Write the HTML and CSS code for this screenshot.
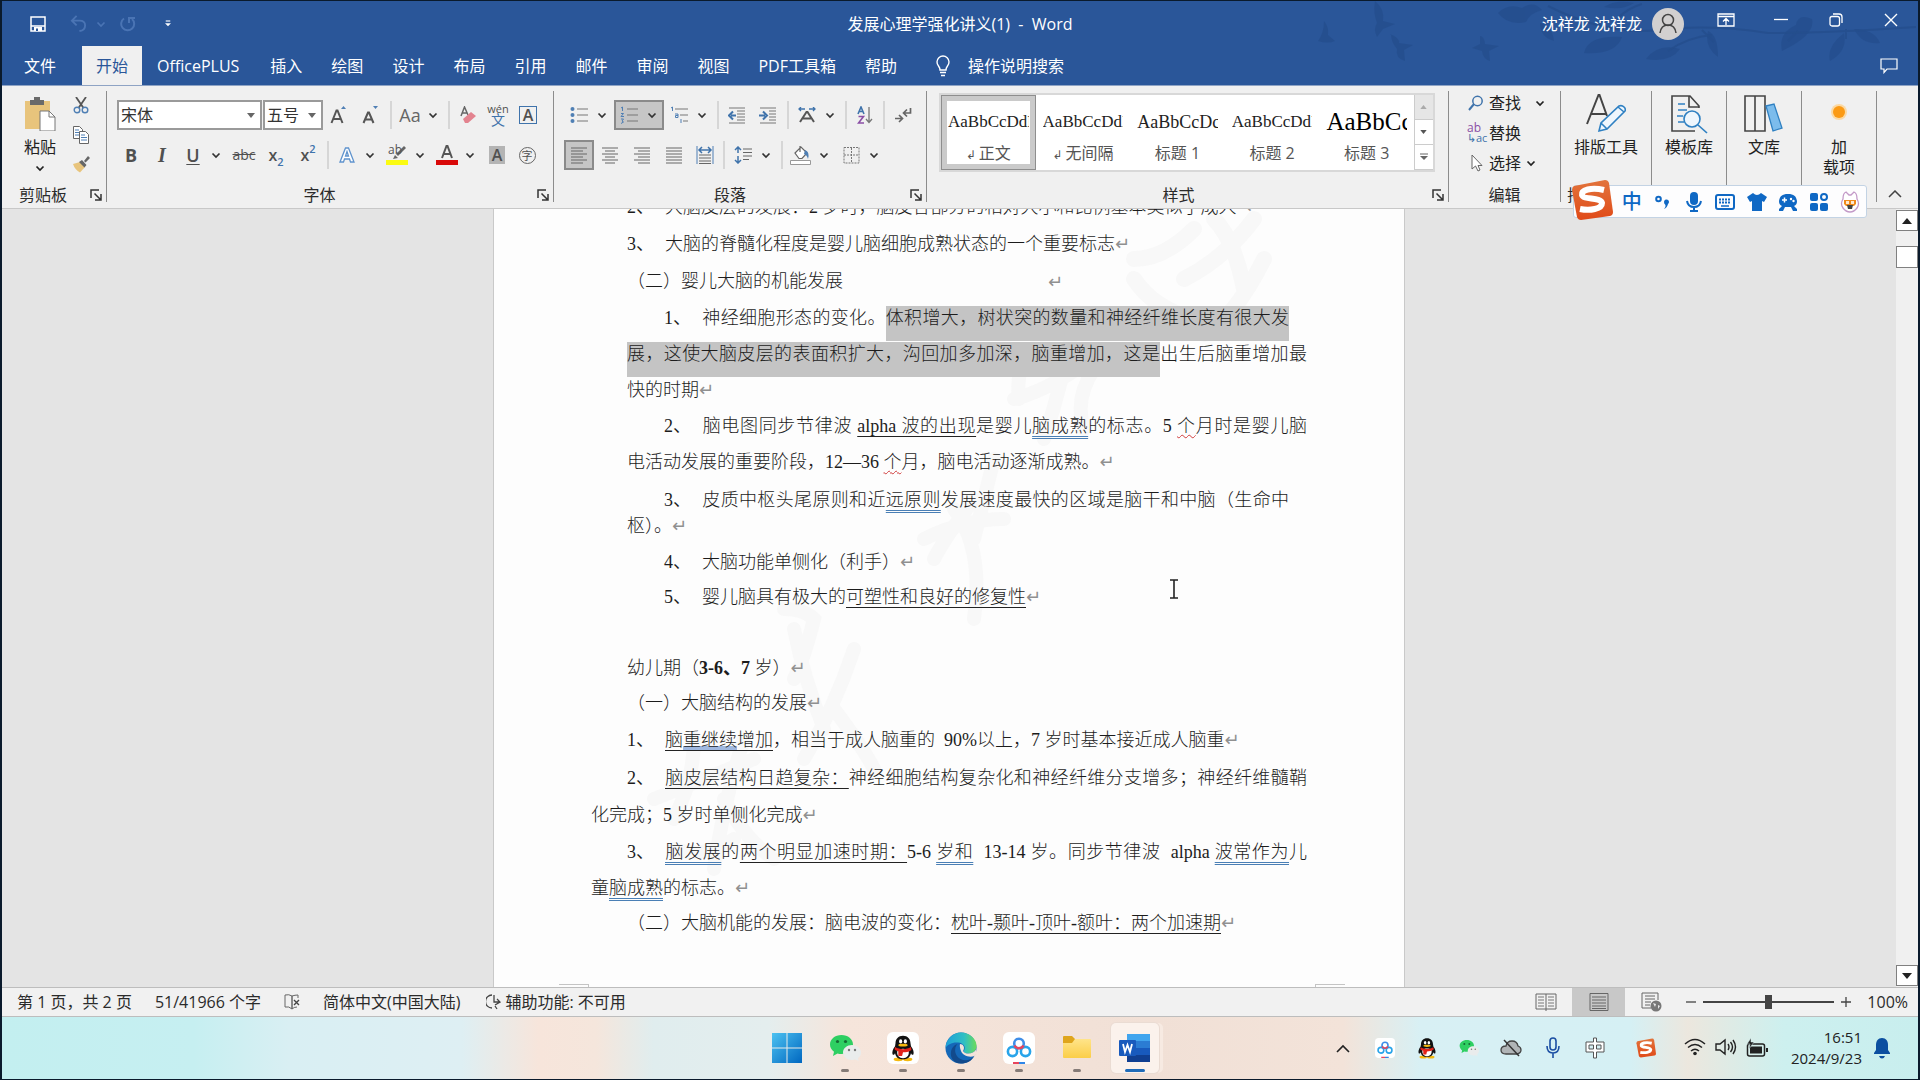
FILE: index.html
```html
<!DOCTYPE html>
<html lang="zh-CN">
<head>
<meta charset="utf-8">
<title>发展心理学强化讲义(1) - Word</title>
<link rel="stylesheet" href="styles.css">
</head>
<body>
<svg class="defs" aria-hidden="true">
  <defs>
    <linearGradient id="gWin" x1="0" y1="0" x2="1" y2="1"><stop offset="0" stop-color="#4cc2f1"/><stop offset="1" stop-color="#0067c0"/></linearGradient>
    <linearGradient id="gEdge" x1="0" y1="0" x2="1" y2="0"><stop offset="0" stop-color="#1f9fd8"/><stop offset=".6" stop-color="#2fbfc4"/><stop offset="1" stop-color="#6bdb5a"/></linearGradient>
    <linearGradient id="gFold" x1="0" y1="0" x2="0" y2="1"><stop offset="0" stop-color="#ffe48a"/><stop offset="1" stop-color="#fbce48"/></linearGradient>
    <linearGradient id="gSogou" x1="0" y1="0" x2="0" y2="1"><stop offset="0" stop-color="#e2743c"/><stop offset="1" stop-color="#e04a18"/></linearGradient>
    <symbol id="chev" viewBox="0 0 10 10"><path d="M1.5 3.5 5 7l3.5-3.500" fill="none" stroke="currentColor" stroke-width="1.700"/></symbol>
    <symbol id="launch" viewBox="0 0 12 12"><path d="M1 9V1h8M4.500 4.500l6 6M11 5v6H5" fill="none" stroke="#333" stroke-width="1.500"/></symbol>
    <symbol id="qq" viewBox="0 0 32 32">
      <ellipse cx="11" cy="28" rx="5" ry="2" fill="#f5b90f"/><ellipse cx="21" cy="28" rx="5" ry="2" fill="#f5b90f"/>
      <path d="M16 3c-5 0-8 3.500-8 8l-.500 3C5 17 4 21 5 23c1 1 2-.500 2.500-1.500C8.500 26 11.500 28 16 28s7.500-2 8.500-6.500c.500 1 1.500 2.500 2.500 1.500 1-2 0-6-2.500-9l-.500-3c0-4.500-3-8-8-8z" fill="#111"/>
      <path d="M10 19c1-3 11-3 12 0 1 5-2 8-6 8s-7-3-6-8z" fill="#fff"/>
      <path d="M7.500 15c5 3 12 3 17 0l.500 3c-3 2-6 2.500-9 2.500l-1 4h-4v-5c-1.500-.500-3-1-4-2z" fill="#e2231a"/>
      <ellipse cx="13.500" cy="9" rx="1.700" ry="2.300" fill="#fff"/><ellipse cx="18.500" cy="9" rx="1.700" ry="2.300" fill="#fff"/>
      <ellipse cx="16" cy="13" rx="5" ry="1.500" fill="#f5b90f"/>
    </symbol>
    <symbol id="wechat" viewBox="0 0 32 32">
      <path d="M12.500 3C6 3 1 7.200 1 12.500c0 3 1.600 5.500 4 7.300L4 24l4.500-2.500c1.200.400 2.600.500 4 .500C19 22 24 17.800 24 12.500S19 3 12.500 3z" fill="#2ecf62"/>
      <circle cx="8.500" cy="9.500" r="1.600" fill="#136b34"/><circle cx="16.500" cy="9.500" r="1.600" fill="#136b34"/>
      <path d="M23 13c5 0 9 3.300 9 7.500 0 2.300-1.200 4.300-3 5.700l.600 2.800-3.100-1.400c-1.100.300-2.200.400-3.500.400-5 0-9-3.300-9-7.500S18 13 23 13z" fill="#e9ecec"/>
      <circle cx="20" cy="18" r="1.200" fill="#777"/><circle cx="26" cy="18" r="1.200" fill="#777"/>
    </symbol>
    <symbol id="baidu" viewBox="0 0 32 32">
      <rect x="0" y="0" width="32" height="32" rx="6" fill="#fff"/>
      <g fill="none" stroke-width="2.600"><circle cx="9.500" cy="19.500" r="4.600" stroke="#28a4ea"/><circle cx="22.500" cy="19.500" r="4.600" stroke="#28a4ea"/><circle cx="16" cy="11.500" r="4.800" stroke="#3f8ee8"/><path d="M11.500 13.500a5 5 0 0 0 9 0" stroke="#e8455c"/></g>
      <path d="M10 31h6" stroke="#e8455c" stroke-width="2"/><path d="M16 31h6" stroke="#2f86e8" stroke-width="2"/>
    </symbol>
    <symbol id="sogou" viewBox="0 0 42 42">
      <path d="M3 7 34 1q3 0 4 3l4 29q0 3-3 4L10 41q-3 0-4-3L1 11q0-3 2-4z" fill="url(#gSogou)"/>
      <path d="M33 11C20 8 10 11 11 16c1 5 19 2 20 8 0 6-12 8-22 6" fill="none" stroke="#fff" stroke-width="6"/>
    </symbol>
  </defs>
</svg>

<div class="word">
  <header class="top">
    <svg class="art" width="600" height="84" viewBox="0 0 600 84" aria-hidden="true">
      <g fill="#244d8c" opacity=".7">
        <path d="M0 40q6-8 6-20 5 6 4 14l7 6q-7 3-17 0z"/>
        <path d="M57 0q10 8 8 20l12 3-12 5-6 8q-4-8 0-14-4-10-2-22zM72 33q10 4 9 9l14 2-9 5 1 11q-10-3-8-12-6-7-6-15zM162 35q4 0 5 8l14 2-10 5 1 10q-7-2-8-10l-10-3 8-4z"/>
        <path d="M180 12q10-10 24-5 12-8 20 2-12 3-16 12-18 4-28-9zM222 22q12 2 14 18-14-4-14-18zM266 52q4-18 38-16-6 18-38 16zM328 58q12-16 34-10-10 14-34 10zM390 30q10 4 10 26-14-10-10-26zM464 50q-4-18 14-26 2-12 16-6 4 16-30 32zM512 60q-4-14 14-28 4 18-14 28zM536 28q20 0 26 14-18 2-26-14zM286 6q12-8 30-4-12 8-30 4z"/>
      </g>
      <path d="M230 5q60 30 110 24t110 3q60 0 148-6M300 17q10-10 24-14M384 29l12 12M350 50q20-14 44-16M480 30l-10 10M528 28v10" fill="none" stroke="#244d8c" stroke-width="2" opacity=".8"/>
    </svg>
    <div class="titlebar">
      <div class="quick">
        <button class="qa" aria-label="保存"><svg width="16" height="16" viewBox="0 0 16 16"><path d="M1 1h14v14H1zM1 10h14" fill="none" stroke="#fff" stroke-width="1.500"/><path d="M4 11h8v4H4z" fill="#fff"/><path d="M6 12.500h2V15H6z" fill="#2a5699"/></svg></button>
        <button class="qa dim undo" aria-label="撤消"><svg width="17" height="17" viewBox="0 0 18 18"><path d="M7 1 2 6l5 5M2 6h8q6 0 6 5t-6 6" fill="none" stroke="currentColor" stroke-width="2"/></svg></button>
        <button class="qa slim dim" aria-label="撤消列表"><svg width="10" height="10"><use href="#chev"/></svg></button>
        <button class="qa dim redo" aria-label="重复"><svg width="16" height="16" viewBox="0 0 16 16"><path d="M4 2.500a6.500 6.500 0 1 0 8 .500M9 1v6M8 2h7" fill="none" stroke="currentColor" stroke-width="2"/></svg></button>
        <button class="qa undo" aria-label="自定义"><svg width="6" height="8" viewBox="0 0 8 10"><path d="M1 1h6" stroke="#fff" stroke-width="1.500"/><path d="M0 4h8L4 8z" fill="#fff"/></svg></button>
      </div>
      <h1 class="title">发展心理学强化讲义(1)&nbsp; -&nbsp; Word</h1>
      <div class="account">
        <span>沈祥龙 沈祥龙</span>
        <svg class="avatar" width="32" height="32" viewBox="0 0 32 32"><circle cx="16" cy="16" r="16" fill="#d2d0d0"/><circle cx="16" cy="12" r="5.500" fill="none" stroke="#444" stroke-width="1.500"/><path d="M8 25q1-8 8-8t8 8" fill="none" stroke="#444" stroke-width="1.500"/></svg>
        <button class="wb" aria-label="功能区显示选项"><svg width="18" height="14" viewBox="0 0 18 14"><path d="M1 1h16v12H1zM1 3.500h16M9 12V6M6 8.500 9 5.500l3 3" fill="none" stroke="#fff" stroke-width="1.300"/></svg></button>
        <button class="wb" aria-label="最小化"><svg width="14" height="14" viewBox="0 0 14 14"><path d="M0 6.500h14" stroke="#fff" stroke-width="1.300"/></svg></button>
        <button class="wb" aria-label="还原"><svg width="14" height="14" viewBox="0 0 14 14"><rect x="1" y="3.500" width="9.500" height="9.500" rx="2" fill="none" stroke="#fff" stroke-width="1.300"/><path d="M4 1h6q3 0 3 3v6" fill="none" stroke="#fff" stroke-width="1.300"/></svg></button>
        <button class="wb" aria-label="关闭"><svg width="14" height="14" viewBox="0 0 14 14"><path d="m1 1 12 12M13 1 1 13" stroke="#fff" stroke-width="1.400"/></svg></button>
      </div>
    </div>
    <nav class="tabs">
      <a href="#" class="file">文件</a><a href="#" class="on">开始</a><a href="#" class="plus">OfficePLUS</a><a href="#">插入</a><a href="#">绘图</a><a href="#">设计</a><a href="#">布局</a><a href="#">引用</a><a href="#">邮件</a><a href="#">审阅</a><a href="#">视图</a><a href="#">PDF工具箱</a><a href="#">帮助</a>
      <button class="tell"><svg width="14" height="22" viewBox="0 0 14 22"><path d="M4 15q0-2-1.500-4A6 6 0 1 1 11.500 11Q10 13 10 15zM4 17.500h6M5 20.500h4" fill="none" stroke="#fff" stroke-width="1.400"/></svg>操作说明搜索</button>
      <button class="comment" aria-label="批注"><svg width="18" height="16" viewBox="0 0 18 16"><path d="M1 1h16v10H7l-3 3.500V11H1z" fill="none" stroke="#fff" stroke-width="1.200"/></svg></button>
    </nav>
  </header>

  <section class="ribbon">
    <div class="group clip">
      <div class="body clipbody">
        <button class="paste"><svg width="32" height="34" viewBox="0 0 32 34"><path d="M1 4h25v28H1z" fill="#e8c47c"/><path d="M6 3h4V0h6v3h4v5H6z" fill="#6a6a6a"/><path d="M16 14h9l6 6v14H16z" fill="#fff" stroke="#777"/><path d="M25 14v6h6" fill="none" stroke="#777"/></svg>粘贴<svg width="10" height="10"><use href="#chev"/></svg></button>
        <div class="stack">
          <button aria-label="剪切"><svg width="16" height="17" viewBox="0 0 16 17"><path d="M3 0l7.500 11M13 0 5.500 11" stroke="#555" stroke-width="1.800"/><circle cx="4" cy="13" r="2.800" fill="none" stroke="#4f7fb4" stroke-width="1.400"/><circle cx="12" cy="13" r="2.800" fill="none" stroke="#4f7fb4" stroke-width="1.400"/></svg></button>
          <button aria-label="复制"><svg width="16" height="18" viewBox="0 0 16 18"><path d="M.5.500h6l3 3v9h-9z" fill="#fff" stroke="#666"/><path d="M2 4h4M2 6.500h6M2 9h6" stroke="#4f7fb4"/><path d="M6.500 5.500h6l3 3v9h-9z" fill="#fff" stroke="#666"/><path d="M8 9h4M8 11.500h6M8 14h6" stroke="#4f7fb4"/></svg></button>
          <button aria-label="格式刷"><svg width="18" height="17" viewBox="0 0 18 17"><path d="M1 8 8 6l5 5-5 5.500Q3 14 1 8z" fill="#e8c47c"/><path d="m7 6 3-2 4.500 5-2 2.500zM12 5l4-5 2 2-4.500 4.500z" fill="#666"/></svg></button>
        </div>
      </div>
      <div class="foot"><span>剪贴板</span><button class="ln" aria-label="剪贴板选项"><svg width="12" height="12"><use href="#launch"/></svg></button></div>
    </div>

    <div class="group font">
      <div class="body rows">
        <div class="row r1">
          <label class="combo fam"><select aria-label="字体"><option>宋体</option></select><svg width="8" height="5" viewBox="0 0 8 5"><path d="M0 0h8L4 5z" fill="#666"/></svg></label>
          <label class="combo size"><select aria-label="字号"><option>五号</option></select><svg width="8" height="5" viewBox="0 0 8 5"><path d="M0 0h8L4 5z" fill="#666"/></svg></label>
          <button class="b32" aria-label="增大字号"><svg width="18" height="20" viewBox="0 0 18 20"><path d="M1.500 18 6.500 5.500h1L12.500 18M3 14h8" fill="none" stroke="#555" stroke-width="2"/><path d="m11 4 2.500-3L16 4z" fill="#4f7fb4"/></svg></button>
          <button class="b32" aria-label="减小字号"><svg width="18" height="20" viewBox="0 0 18 20"><path d="M1.500 18 6 7.500h1L11.500 18M3 14.500h7" fill="none" stroke="#555" stroke-width="2"/><path d="m11 1 2.500 3L16 1z" fill="#4f7fb4"/></svg></button>
          <i class="sep"></i>
          <button class="dd"><span class="aa">Aa</span><svg width="10" height="10"><use href="#chev"/></svg></button>
          <i class="sep"></i>
          <button class="b30" aria-label="清除格式"><svg width="16" height="18" viewBox="0 0 16 18"><path d="M1 10 4.500 1 8 9M2.500 7H7" fill="none" stroke="#666" stroke-width="1.500"/><path d="m3 13 8-7 5 4-8 7H5z" fill="#e3838f"/></svg></button>
          <button class="b30 pinyin" aria-label="拼音指南"><span>wén</span><b>文</b></button>
          <button class="b30"><span class="boxed">A</span></button>
        </div>
        <div class="row">
          <button class="b30 bold">B</button>
          <button class="b32 ital">I</button>
          <button class="dd"><span class="und">U</span><svg width="10" height="10"><use href="#chev"/></svg></button>
          <button class="b32 strike">abc</button>
          <button class="b32 x">x<sub>2</sub></button>
          <button class="b32 x">x<sup>2</sup></button>
          <i class="sep"></i>
          <button class="dd" aria-label="文本效果"><span><svg width="16" height="16" viewBox="0 0 16 16"><path d="M1 15 6.500 1h3L15 15h-3.500l-1-3h-5l-1 3zM6.500 9h3L8 4.500z" fill="#fff" stroke="#5f93cd" stroke-width="1.300"/></svg></span><svg width="10" height="10"><use href="#chev"/></svg></button>
          <button class="dd" aria-label="突出显示"><span class="mark"><span class="hl">ab</span><svg width="22" height="20" viewBox="0 0 22 20"><path d="m10 9 8-8 2 2-8 8zM9 10l3 3-5 1z" fill="#666"/><path d="M0 15h22v5H0z" fill="#fbfb12"/></svg></span><svg width="10" height="10"><use href="#chev"/></svg></button>
          <button class="dd" aria-label="字体颜色"><span><svg width="22" height="20" viewBox="0 0 22 20"><path d="m6 13 4.500-12h1L16 13M7.500 9h7" fill="none" stroke="#555" stroke-width="2"/><path d="M0 15h22v5H0z" fill="#d90909"/></svg></span><svg width="10" height="10"><use href="#chev"/></svg></button>
          <button class="b30"><span class="shade">A</span></button>
          <button class="b30"><span class="circ">字</span></button>
        </div>
      </div>
      <div class="foot"><span>字体</span><button class="ln" aria-label="字体选项"><svg width="12" height="12"><use href="#launch"/></svg></button></div>
    </div>

    <div class="group para">
      <div class="body rows">
        <div class="row r1">
          <button class="dd" aria-label="项目符号"><span><svg width="18" height="18" viewBox="0 0 18 18"><path d="M7 3h11M7 9h11M7 15h11" stroke="#777"/><g fill="#4f7fb4"><circle cx="2.500" cy="3" r="2"/><circle cx="2.500" cy="9" r="2"/><circle cx="2.500" cy="15" r="2"/></g></svg></span><svg width="10" height="10"><use href="#chev"/></svg></button>
          <button class="dd sel" aria-label="编号"><span><svg width="18" height="18" viewBox="0 0 18 18"><path d="M7 3h11M7 9h11M7 15h11" stroke="#777"/><path d="M1 2l1.500-1v4M1 7.500h2.500L1 10.500h3M1 13h2.500L2 15l1.500 1L1 17.500" fill="none" stroke="#4f7fb4"/></svg></span><svg width="10" height="10"><use href="#chev"/></svg></button>
          <button class="dd" aria-label="多级列表"><span><svg width="18" height="18" viewBox="0 0 18 18"><path d="M5 3h13M10 9h8M13 15h5" stroke="#777"/><path d="M1 2l1.500-1v4M5 8h3v3.500H5.500v-2H8M11 13v4" fill="none" stroke="#4f7fb4"/></svg></span><svg width="10" height="10"><use href="#chev"/></svg></button>
          <i class="sep"></i>
          <button class="b30" aria-label="减少缩进"><svg width="18" height="17" viewBox="0 0 18 17"><path d="M1 1h16M9 4h8M9 7h8M9 10h8M9 13h8M1 16h16" stroke="#777"/><path d="M8 8.500H3M5 4.500l-4 4 4 4" fill="none" stroke="#3f73ab" stroke-width="2"/></svg></button>
          <button class="b32" aria-label="增加缩进"><svg width="18" height="17" viewBox="0 0 18 17"><path d="M1 1h16M10 4h7M10 7h7M10 10h7M10 13h7M1 16h16" stroke="#777"/><path d="M0 8.500h6M4 4.500l4 4-4 4" fill="none" stroke="#3f73ab" stroke-width="2"/></svg></button>
          <i class="sep"></i>
          <button class="dd" aria-label="中文版式"><span><svg width="18" height="16" viewBox="0 0 18 16"><path d="M2 15 8.500 5h1L16 15M5 11.500h8" fill="none" stroke="#555" stroke-width="2"/><path d="M7 2H1m2-2L1 2l2 2M11 2h6m-2-2 2 2-2 2" fill="none" stroke="#3f73ab" stroke-width="1.300"/></svg></span><svg width="10" height="10"><use href="#chev"/></svg></button>
          <i class="sep"></i>
          <button class="b30" aria-label="排序"><svg width="16" height="18" viewBox="0 0 16 18"><path d="m1 8 3-7 3 7M2 5.500h4" fill="none" stroke="#3f73ab" stroke-width="1.600"/><path d="M1.500 10.500h5L1.500 17h5.500" fill="none" stroke="#8a4fa5" stroke-width="1.600"/><path d="M12 1v15M9 13l3 3.500 3-3.500" fill="none" stroke="#777" stroke-width="1.300"/></svg></button>
          <i class="sep"></i>
          <button class="b30" aria-label="显示编辑标记"><svg width="17" height="15" viewBox="0 0 17 15"><path d="M15.500 0v5H9m3-3.500L8.500 5 12 8.500M0 10.500h7M4 7l3.500 3.500L4 14" fill="none" stroke="#666" stroke-width="1.700"/></svg></button>
        </div>
        <div class="row">
          <button class="b30 sel" aria-label="左对齐"><svg width="16" height="17" viewBox="0 0 16 17"><path d="M0 1h16M0 4h12M0 7h16M0 10h12M0 13h16M0 16h12" stroke="#666"/></svg></button>
          <button class="b32" aria-label="居中"><svg width="16" height="17" viewBox="0 0 16 17"><path d="M0 1h16M3 4h10M0 7h16M3 10h10M0 13h16M3 16h10" stroke="#666"/></svg></button>
          <button class="b32" aria-label="右对齐"><svg width="16" height="17" viewBox="0 0 16 17"><path d="M0 1h16M4 4h12M0 7h16M4 10h12M0 13h16M4 16h12" stroke="#666"/></svg></button>
          <button class="b32" aria-label="两端对齐"><svg width="16" height="17" viewBox="0 0 16 17"><path d="M0 1h16M0 4h16M0 7h16M0 10h16M0 13h16M0 16h16" stroke="#666"/></svg></button>
          <button class="b30" aria-label="分散对齐"><svg width="18" height="18" viewBox="0 0 18 18"><path d="M1 0v18M17 0v18" stroke="#4f7fb4"/><path d="M3 9h12M3 12h12M3 15h12M3 17.500h12" stroke="#666"/><path d="M3 4h12M6 1 3 4l3 3M12 1l3 3-3 3" fill="none" stroke="#3f73ab" stroke-width="1.500"/></svg></button>
          <i class="sep"></i>
          <button class="dd" aria-label="行距"><span><svg width="18" height="18" viewBox="0 0 18 18"><path d="M9 3h9M9 6.500h9M9 10h9M9 13.500h6" stroke="#666"/><path d="M4 1v6M1 4l3-3 3 3M4 10v7M1 14l3 3 3-3" fill="none" stroke="#3f73ab" stroke-width="1.500"/></svg></span><svg width="10" height="10"><use href="#chev"/></svg></button>
          <i class="sep"></i>
          <button class="dd" aria-label="底纹"><span><svg width="22" height="20" viewBox="0 0 22 20"><path d="m5 8 6-6 6 6-5 5.500H9zM10 7V1" fill="#fff" stroke="#666" stroke-width="1.200"/><path d="M15 5q5 2 3 9-1-4-4-5z" fill="#4f7fb4"/><path d="M.5 15.500h20v4H.5z" fill="#fff" stroke="#999"/></svg></span><svg width="10" height="10"><use href="#chev"/></svg></button>
          <button class="dd" aria-label="边框"><span><svg width="17" height="17" viewBox="0 0 17 17"><path d="M1 .500h15v15.500H1zM8.500 1v15M1 8h15" fill="none" stroke="#777" stroke-dasharray="2 1"/></svg></span><svg width="10" height="10"><use href="#chev"/></svg></button>
        </div>
      </div>
      <div class="foot"><span>段落</span><button class="ln" aria-label="段落选项"><svg width="12" height="12"><use href="#launch"/></svg></button></div>
    </div>

    <div class="group styles">
      <div class="body">
        <div class="gallery">
          <button class="st cur"><span class="pv">AaBbCcDdI</span><span class="nm"><small>↲</small>正文</span></button>
          <button class="st"><span class="pv">AaBbCcDdI</span><span class="nm"><small>↲</small>无间隔</span></button>
          <button class="st"><span class="pv p2">AaBbCcDc</span><span class="nm">标题 1</span></button>
          <button class="st"><span class="pv">AaBbCcDdI</span><span class="nm">标题 2</span></button>
          <button class="st"><span class="pv p3">AaBbCc</span><span class="nm">标题 3</span></button>
          <div class="gs">
            <button class="off" aria-label="上一行"><svg width="7" height="4" viewBox="0 0 8 5"><path d="M0 5h8L4 0z" fill="#aaa"/></svg></button>
            <button aria-label="下一行"><svg width="7" height="4" viewBox="0 0 8 5"><path d="M0 0h8L4 5z" fill="#555"/></svg></button>
            <button aria-label="其他"><svg width="8" height="8" viewBox="0 0 8 8"><path d="M0 1h8" stroke="#666"/><path d="M0 3h8L4 7z" fill="#666"/></svg></button>
          </div>
        </div>
      </div>
      <div class="foot"><span>样式</span><button class="ln" aria-label="样式选项"><svg width="12" height="12"><use href="#launch"/></svg></button></div>
    </div>

    <div class="group edit">
      <div class="body cmds">
        <button class="cmd wide"><svg width="16" height="16" viewBox="0 0 16 16"><circle cx="9.500" cy="6" r="4.700" fill="none" stroke="#3f73ab" stroke-width="1.500"/><path d="m6 9-5 6" stroke="#3f73ab" stroke-width="2"/></svg><span>查找</span><svg width="10" height="10"><use href="#chev"/></svg></button>
        <button class="cmd"><span class="rep"><b>ab</b><i>↳ac</i></span><span>替换</span></button>
        <button class="cmd"><svg width="16" height="18" viewBox="0 0 16 18"><path d="M4 1v14l3.500-3 2.500 5 2-1-2-4.500h4z" fill="#fff" stroke="#666"/></svg><span>选择</span><svg width="10" height="10"><use href="#chev"/></svg></button>
      </div>
      <div class="foot"><span>编辑</span></div>
    </div>

    <div class="group big wider">
      <div class="body"><button class="bb"><svg width="40" height="40" viewBox="0 0 40 40"><path d="M1 30 12.500 1h1L21 22M5 20h15" fill="none" stroke="#444" stroke-width="2"/><path d="m13 37 2-8 18-17q3-1 5 1t1 4L21 35zM15 29l6 6M32 13l6 5" fill="#eef6fd" stroke="#2f80c2" stroke-width="1.600"/></svg>排版工具</button></div>
      <div class="foot start"><span>排版工具</span></div>
    </div>
    <div class="group big"><div class="body"><button class="bb"><svg width="38" height="40" viewBox="0 0 38 40"><path d="M29 14v-2L20 2H2v35h23M19 2v11h10" fill="none" stroke="#444" stroke-width="1.600"/><path d="M8 10h7M8 16h9M7 22h6M8 28h6" stroke="#2f80c2" stroke-width="1.500"/><circle cx="22" cy="25" r="8" fill="#eef6fd" stroke="#2f80c2" stroke-width="1.600"/><path d="m28 31 9 8" stroke="#2f80c2" stroke-width="1.600"/></svg>模板库</button></div></div>
    <div class="group big"><div class="body"><button class="bb"><svg width="40" height="40" viewBox="0 0 40 40"><path d="M1 2h20v35H1zM11 2v35" fill="none" stroke="#444" stroke-width="1.600"/><path d="m22 12 8-2 8 24-9 3z" fill="#7cbcec" stroke="#2f80c2" stroke-width="1.300"/></svg>文库</button></div></div>
    <div class="group big"><div class="body"><button class="bb"><svg width="40" height="40" viewBox="0 0 40 40"><circle cx="20" cy="18" r="8" fill="#fbd9a4"/><circle cx="20" cy="18" r="6" fill="#fb9a14"/></svg>加<br>载项</button></div></div>
    <button class="fold" aria-label="折叠功能区"><svg width="14" height="8" viewBox="0 0 14 8"><path d="m1 7 6-6 6 6" fill="none" stroke="#444" stroke-width="1.500"/></svg></button>

    <div class="ime">
      <svg class="imelogo" width="42" height="42"><use href="#sogou"/></svg>
      <button class="zh">中</button>
      <button aria-label="标点"><svg width="18" height="18" viewBox="0 0 18 18"><circle cx="4.500" cy="6" r="2.300" fill="none" stroke="#0f68c4" stroke-width="2"/><path d="M10 9a2.500 2.500 0 1 1 4 2q-1 4-4 5 2-2 1.500-4Q10 11 10 9z" fill="#0f68c4"/></svg></button>
      <button aria-label="语音"><svg width="18" height="20" viewBox="0 0 18 20"><rect x="5" y="0" width="8" height="13" rx="4" fill="#0f68c4"/><path d="M2 9q1 6 7 6t7-6M9 15v3M5 19h8" fill="none" stroke="#0f68c4" stroke-width="2"/></svg></button>
      <button aria-label="软键盘"><svg width="20" height="16" viewBox="0 0 20 16"><rect x="1" y="1" width="18" height="14" rx="2" fill="none" stroke="#0f68c4" stroke-width="2"/><path d="M4 5.500h12M4 8.500h12" stroke="#0f68c4" stroke-width="2" stroke-dasharray="2 1"/><path d="M6 12h8" stroke="#0f68c4" stroke-width="1.500"/></svg></button>
      <button aria-label="皮肤"><svg width="20" height="18" viewBox="0 0 20 18"><path d="M6 0q4 4 8 0l6 4-3 5-2-1v10H5V8L3 9 0 4z" fill="#0f68c4"/></svg></button>
      <button aria-label="游戏"><svg width="20" height="18" viewBox="0 0 20 18"><path d="M10 1c6 0 8 2 9 7 0 3-1 4-3 5l3 3v2h-4l-2-4H7l-2 4H1v-2l3-3c-2-1-3-2-3-5 1-5 3-7 9-7z" fill="#0f68c4"/><path d="M4 7h5M6.500 4.500v5" stroke="#fff" stroke-width="1.500"/><circle cx="13" cy="6" r="1.200" fill="#fff"/><circle cx="15.500" cy="8" r="1.200" fill="#fff"/></svg></button>
      <button aria-label="工具箱"><svg width="18" height="18" viewBox="0 0 18 18"><g fill="#0f68c4"><rect width="8" height="8" rx="2"/><rect y="10" width="8" height="8" rx="2"/><rect x="10" y="10" width="8" height="8" rx="2"/></g><circle cx="14" cy="4" r="3" fill="none" stroke="#0f68c4" stroke-width="2"/></svg></button>
      <button aria-label="助手"><svg width="20" height="22" viewBox="0 0 20 22"><path d="M3 8Q3 2 6 1l3 3h2l3-3q3 1 3 7 3 5 0 9-3 4-7 4t-7-4q-3-4 0-9z" fill="#fff" stroke="#c39ac8" stroke-width="1.300"/><path d="M4 9h12v4l-2 2H6l-2-2z" fill="#f08a1c"/><path d="M7 14h6l-1 4H8z" fill="#444"/><path d="M6 10h3v3H6zM11 10h3v3h-3z" fill="#fde9cf"/></svg></button>
    </div>
  </section>

  <main class="work">
    <article class="page">
      <svg class="wm" width="910" height="780" viewBox="0 0 910 780" aria-hidden="true">
        <g fill="none" stroke="#f8f8f8" stroke-linecap="round">
          <path d="M700 20q-30 30-60 30M720 10q20 20 30 70M690 70q40-20 70-60M770 50q-30 60-60 75M640 70q20 30 60 40" stroke-width="16"/>
          <path d="M550 130q-30 20-25 60M580 110q-10 60-30 120M520 190q40-10 90-50M600 160q-20 30-10 60" stroke-width="14"/>
          <path d="M480 290q-30 40-40 60M460 300q30 40 20 110M430 330q40-20 80-20M500 250l-20 80" stroke-width="14"/>
          <path d="M290 400q20 0 30 10-10 40-20 60M300 420q10 50 30 100M360 440q-20 60-50 110M340 500q30 40 40 60" stroke-width="14"/>
          <path d="M200 530q0 40-20 80M160 590q50-20 100-40M250 530q-20 60-30 130M180 640q30 10 60-10M230 590q20 40 50 60" stroke-width="14"/>
        </g>
      </svg>
      <div class="text">
        <p class="ln37"><span class="no">2、</span>大脑皮层的发展：2 岁时，脑皮各部分的相对大小和比例基本类似于成人&nbsp; <i class="cr">↵</i></p>
        <p class="ln37"><span class="no">3、</span>大脑的脊髓化程度是婴儿脑细胞成熟状态的一个重要标志<i class="cr">↵</i></p>
        <p class="ln37 tabbed"><span>（二）婴儿大脑的机能发展</span><i class="cr">↵</i></p>
        <p class="in just early"><span class="no">1、</span>神经细胞形态的变化。<mark>体积增大，树状突的数量和神经纤维长度有很大发</mark></p>
        <p class="just"><mark>展，这使大脑皮层的表面积扩大，沟回加多加深，脑重增加，这是</mark>出生后脑重增加最</p>
        <p>快的时期<i class="cr">↵</i></p>
        <p class="in just"><span class="no">2、</span>脑电图同步节律波 <u>alpha 波的出现</u>是婴儿<u class="dbl">脑成熟</u>的标志。5 <u class="red">个</u>月时是婴儿脑</p>
        <p class="ln37">电活动发展的重要阶段，12—36 <u class="red">个</u>月，脑电活动逐渐成熟。<i class="cr">↵</i></p>
        <div class="tight">
          <p class="in just early"><span class="no">3、</span>皮质中枢头尾原则和近<u class="dbl">远原则</u>发展速度最快的区域是脑干和中脑（生命中</p>
          <p>枢）。<i class="cr">↵</i></p>
        </div>
        <p class="in"><span class="no">4、</span>大脑功能单侧化（利手）<i class="cr">↵</i></p>
        <p class="in ln35"><span class="no">5、</span>婴儿脑具有极大的<u>可塑性和良好的修复性</u><i class="cr">↵</i></p>
        <p class="ln35">&nbsp;</p>
        <p>幼儿期（<b>3-6、7</b> 岁）<i class="cr">↵</i></p>
        <p class="ln35">（一）大脑结构的发展<i class="cr">↵</i></p>
        <p class="ln38"><span class="no">1、</span><u>脑<span class="tint">重继续</span>增加</u>，相当于成人脑重的&nbsp; 90%以上，7 岁时基本接近成人脑重<i class="cr">↵</i></p>
        <p class="ln38 just"><span class="no">2、</span><u>脑皮层结构日趋复杂：</u>神经细胞结构复杂化和神经纤维分支增多；神经纤维髓鞘</p>
        <p class="ln37 out">化完成；5 岁时单侧化完成<i class="cr">↵</i></p>
        <p class="just"><span class="no">3、</span><u class="dbl">脑发展</u>的<u>两个明显加速时期：</u>5-6 <u class="dbl">岁和</u>&nbsp; 13-14 岁。同步节律波&nbsp; alpha <u class="dbl">波常作为</u>儿</p>
        <p class="out">童<u class="dbl">脑成熟</u>的标志。<i class="cr">↵</i></p>
        <p class="ln35">（二）大脑机能的发展：脑电波的变化：<u>枕叶-颞叶-顶叶-额叶：两个加速期</u><i class="cr">↵</i></p>
      </div>
      <div class="corners"><i></i><i class="r"></i></div>
      <svg class="ibeam" width="10" height="20" viewBox="0 0 10 20"><path d="M1 1h8M1 19h8M5 1v18" stroke="#222" stroke-width="1.600"/></svg>
    </article>
    <div class="scroll">
      <button aria-label="向上滚动"><svg width="10" height="6" viewBox="0 0 10 6"><path d="M0 6h10L5 0z" fill="#222"/></svg></button>
      <div class="thumb"></div>
      <button class="down" aria-label="向下滚动"><svg width="10" height="6" viewBox="0 0 10 6"><path d="M0 0h10L5 6z" fill="#222"/></svg></button>
    </div>
  </main>

  <footer class="status">
    <span>第 1 页，共 2 页</span>
    <span>51/41966 个字</span>
    <svg width="16" height="16" viewBox="0 0 16 16"><path d="M8 2Q5 0 1 1v12q4-1 7 2zM8 15V2q3-1 6-1v3M8 15q2-2 5-2" fill="none" stroke="#666"/><path d="m10 6 5 5M15 6l-5 5" stroke="#444" stroke-width="1.400"/></svg>
    <span>简体中文(中国大陆)</span>
    <span class="acc"><svg width="16" height="16" viewBox="0 0 16 16"><path d="M6 1a6.500 6.500 0 0 0 0 13M8 1v7h6M11 5l3 3-5 3M9 12l2 3" fill="none" stroke="#444" stroke-width="1.300"/></svg>辅助功能: 不可用</span>
    <div class="views">
      <button aria-label="阅读视图"><svg width="22" height="18" viewBox="0 0 22 18"><path d="M1 1h20v15H1zM11 1v17" fill="none" stroke="#666"/><path d="M3 4h6M3 7h6M3 10h6M3 13h6M13 4h6M13 7h6M13 10h6M13 13h6" stroke="#777"/></svg></button>
      <button class="on" aria-label="页面视图"><svg width="20" height="18" viewBox="0 0 20 18"><path d="M1 .500h18v17H1zM3 4h14M3 7h14M3 10h14M3 13h14M3 15.500h14" fill="none" stroke="#666"/></svg></button>
      <button aria-label="Web 版式"><svg width="21" height="20" viewBox="0 0 21 20"><path d="M10 16H1V1h16v7M4 4h10M4 7h10M4 10h6M4 13h5" fill="none" stroke="#666"/><circle cx="15" cy="14" r="5.500" fill="#777"/><path d="m12 11 3 1-1 3zM17 13l2 1-2 3z" fill="#e8e8e8"/></svg></button>
    </div>
    <div class="zoom">
      <button aria-label="缩小"><svg width="10" height="12"><path d="M0 6h10" stroke="#444" stroke-width="1.300"/></svg></button>
      <input type="range" min="10" max="190" value="100" aria-label="显示比例">
      <button aria-label="放大"><svg width="10" height="12"><path d="M0 6h10M5 1v10" stroke="#444" stroke-width="1.300"/></svg></button>
      <span>100%</span>
    </div>
  </footer>
</div>

<footer class="taskbar">
  <div class="apps">
    <button aria-label="开始"><svg width="32" height="32" viewBox="0 0 32 32"><path d="M1 1h14.500v14.500H1zM16.500 1H31v14.500H16.500zM1 16.500h14.500V31H1zM16.500 16.500H31V31H16.500z" fill="url(#gWin)"/></svg></button>
    <button class="run" aria-label="微信"><svg width="32" height="32"><use href="#wechat"/></svg></button>
    <button class="run" aria-label="QQ"><svg width="32" height="32" viewBox="0 0 32 32"><rect width="32" height="32" rx="6" fill="#fff"/><use href="#qq" x="1" y="1" width="30" height="30"/></svg></button>
    <button class="run" aria-label="Edge"><svg width="32" height="32" viewBox="0 0 32 32"><circle cx="16" cy="16" r="15.500" fill="#1568b8"/><path d="M.5 16C1 7 8 .500 16 .500c9 0 15.500 6.500 15.500 13.500 0 5-4 7.500-8 7.500-3.500 0-5.500-1.500-4.500-3 2-3 0-7.500-6-8C7 10 2 13 .5 16z" fill="url(#gEdge)"/><path d="M12.500 12c-4 4-3 12 3 15 5 2.500 11 1 14-3.500-3 6-8 8-13.500 8C9 31.500 5 26 6 20c.5-4 3-7 6.500-8z" fill="#124a8c"/><path d="M15 12c3 0 5 3 3.500 6-1 1.500 1 3.500 5 3.500 3 0 6-1.500 7.500-4l.5 4-2 2.500c-6 2-12-1-13.500-5-1-3-1.500-5-1-7z" fill="#f3e3da"/></svg></button>
    <button class="run" aria-label="百度网盘"><svg width="32" height="32"><use href="#baidu"/></svg></button>
    <button class="run" aria-label="文件资源管理器"><svg width="32" height="32" viewBox="0 0 32 32"><path d="M2 5q0-1 1-1h8l3 3v5H2z" fill="#dfa51c"/><path d="M2 11h9l3-4h15q1 0 1 1v17q0 1-1 1H3q-1 0-1-1z" fill="url(#gFold)"/></svg></button>
    <button class="run active" aria-label="Word"><svg width="32" height="32" viewBox="0 0 32 32"><path d="M8 2h23v8H8z" fill="#41a5ee"/><path d="M8 9h23v7H8z" fill="#2b7cd3"/><path d="M8 16h23v7H8z" fill="#185abd"/><path d="M8 23h23v7H8z" fill="#103f91"/><rect x="0" y="8" width="17" height="16" rx="1" fill="#185abd"/><path d="m4 12 2 8 2.500-7L11 20l2-8" fill="none" stroke="#fff" stroke-width="1.800"/></svg></button>
  </div>
  <div class="tray">
    <button aria-label="显示隐藏的图标"><svg width="14" height="9" viewBox="0 0 14 9"><path d="m1 8 6-6 6 6" fill="none" stroke="#222" stroke-width="1.600"/></svg></button>
    <button aria-label="百度网盘"><svg width="20" height="20"><use href="#baidu"/></svg></button>
    <button aria-label="QQ"><svg width="24" height="24"><use href="#qq"/></svg></button>
    <button aria-label="微信"><svg width="20" height="20"><use href="#wechat"/></svg></button>
    <button aria-label="OneDrive"><svg width="22" height="18" viewBox="0 0 22 18"><path d="M6 15q-5 0-5-4t5-4q1-5 6-5t6 5q3 1 3 4t-4 4z" fill="#b0b4b6" stroke="#444" stroke-width="1.300"/><path d="m4 1 15 16" stroke="#333" stroke-width="1.500"/></svg></button>
    <button aria-label="麦克风"><svg width="14" height="22" viewBox="0 0 14 22"><rect x="4" y="1" width="6" height="12" rx="3" fill="none" stroke="#1c4fa3" stroke-width="1.600"/><path d="M1 9q0 7 6 7t6-7M7 16v5" fill="none" stroke="#1c4fa3" stroke-width="1.600"/></svg></button>
    <button aria-label="输入法"><svg width="20" height="22" viewBox="0 0 20 22"><path d="M8.500 1h3v4H19v10h-7.500v6h-3v-6H1V5h7.500zM4 8v4h4.500V8zM11.500 8v4H16V8z" fill="#fff" stroke="#555"/></svg></button>
    <button class="so" aria-label="搜狗输入法"><svg width="20" height="20"><use href="#sogou"/></svg></button>
    <div class="sys">
      <svg width="22" height="18" viewBox="0 0 22 18"><g fill="none" stroke="#222" stroke-width="1.500"><path d="M1 6q10-9 20 0M4 9.500q7-6 14 0M7 13q4-3.500 8 0"/></g><circle cx="11" cy="15.500" r="1.800" fill="#222"/></svg>
      <svg width="22" height="18" viewBox="0 0 22 18"><path d="M1 6h4l5-4v14l-5-4H1zM13 6q2 3 0 6M15.500 4q4 5 0 10M18 2q5 7 0 14" fill="none" stroke="#222" stroke-width="1.400"/></svg>
      <svg width="22" height="20" viewBox="0 0 22 20"><rect x="1.500" y="6" width="17" height="12" rx="2" fill="none" stroke="#222" stroke-width="1.500"/><path d="M4 8.500h12v7H4zM20 10h2v4h-2z" fill="#222"/><path d="M5 0 1 6h3l-1 5 5-7H5z" fill="#222" stroke="#d9f0f0" stroke-width=".5"/></svg>
    </div>
    <div class="clock"><span>16:51</span><span>2024/9/23</span></div>
    <svg width="18" height="22" viewBox="0 0 18 22"><path d="M9 1c-4 0-6 3-6 7v5l-2 3v1h16v-1l-2-3V8c0-4-2-7-6-7zM6 19h6q-1 2.500-3 2.500T6 19z" fill="#0b4fa0"/></svg>
  </div>
</footer>
</body>
</html>
```
FILE: styles.css
```css
* { box-sizing: border-box; }
html, body { height: 100%; }
body {
  margin: 0;
  padding: 1px 2px;
  background: #0a1a2c;
  display: flex;
  flex-direction: column;
  overflow: hidden;
  font: 16px/20px "Open Sans", "Noto Sans CJK SC", sans-serif;
  color: #2b2b2b;
}
button { margin: 0; padding: 0; border: 0; background: none; font: inherit; color: inherit; display: flex; align-items: center; justify-content: center; }
svg { display: block; flex: none; }
a { color: inherit; text-decoration: none; }
p { margin: 0; }
.defs { position: absolute; width: 0; height: 0; }

.word { flex: 1; min-height: 0; display: flex; flex-direction: column; background: #f0f0f0; }

/* title bar and tabs */
.top { position: relative; background: #2a5699; color: #fff; border-bottom: 1px solid #8ea3c4; }
.art { position: absolute; right: 0; top: 0; }
.titlebar { position: relative; height: 45px; display: grid; grid-template-columns: 1fr auto 1fr; align-items: center; }
.quick { display: flex; align-items: center; padding-left: 21px; }
.qa { width: 30px; height: 30px; }
.qa.slim { width: 16px; }
.qa.dim { color: #4a74b4; }
.qa.undo { margin-left: 10px; }
.qa.redo { margin-left: 4px; }
.title { margin: 0; font-size: 16px; font-weight: 400; }
.account { display: flex; justify-content: flex-end; align-items: center; }
.avatar { margin: 0 14px 0 10px; }
.wb { width: 55px; height: 30px; margin-bottom: 8px; }
.tabs { position: relative; display: flex; height: 39px; }
.tabs a { padding: 0 14px; margin-right: 1px; display: flex; align-items: center; }
.tabs .file { padding: 0 26px 0 22px; margin: 0; }
.tabs .on { background: #f0f0f0; color: #2a5699; }
.tabs .plus { margin-right: 3px; }
.tell { gap: 18px; margin-left: 24px; }
.comment { margin-left: auto; width: 58px; }

/* ribbon */
.ribbon { position: relative; display: flex; height: 123px; padding: 5px 0 6px; border-bottom: 1px solid #c8c8c8; background: #f0f0f0; }
.group { flex: none; display: flex; flex-direction: column; border-right: 1px solid #8c8c8c; }
.body { flex: 1; min-height: 0; }
.foot { position: relative; height: 20px; line-height: 20px; display: flex; justify-content: center; margin-bottom: -3px; }
.foot.start { justify-content: flex-start; padding-left: 6px; }
.ln { position: absolute; right: 3px; bottom: 3px; width: 14px; height: 14px; }
.clip { width: 105px; }
.clip .foot { padding-right: 22px; }
.font { width: 447px; padding-left: 9px; }
.para { width: 373px; padding-left: 10px; }
.styles { flex: 1; padding-left: 12px; min-width: 0; }
.font .foot, .para .foot, .styles .foot { padding-right: 30px; }
.edit { width: 112px; }
.big { width: 75px; }
.big.wider { width: 91px; }
.clipbody { display: flex; padding: 6px 0 0 20px; }
.paste { flex-direction: column; justify-content: flex-start; width: 36px; gap: 5px; line-height: 22px; white-space: nowrap; color: #222; }
.stack { display: flex; flex-direction: column; justify-content: space-between; margin-left: 14px; height: 76px; }
.rows { display: flex; flex-direction: column; gap: 10px; padding-top: 9px; }
.row { display: flex; height: 30px; align-items: stretch; color: #505050; }
.b30, .b32, .dd { flex: none; height: 30px; }
.b30 { width: 30px; }
.b32 { width: 32px; }
.dd { width: 50px; color: #333; }
.dd > :first-child { width: 30px; display: flex; justify-content: center; }
.dd > svg { width: 10px; margin: 0 7px 0 3px; }
.sel { background: #c6c6c6; outline: 2px solid #8a8a8a; outline-offset: -2px; }
.sep { width: 2px; margin: 1px 3px; background: #d6d6d6; }
.combo { position: relative; display: flex; height: 30px; border: 2px solid #9a9a9a; background: #fff; }
.combo select { appearance: none; width: 100%; border: 0; padding: 0 2px; background: transparent; font: inherit; color: #333; }
.combo svg { position: absolute; right: 5px; top: 11px; }
.fam { width: 145px; margin: 0 1px; }
.size { width: 60px; }
.aa { font-size: 18px; color: #666; }
.pinyin { flex-direction: column; font-size: 11px; line-height: 9px; }
.pinyin b { font-size: 14px; line-height: 14px; font-weight: 400; color: #3f73ab; }
.boxed { border: 1px solid #3f73ab; width: 18px; height: 18px; line-height: 16px; font-weight: 600; }
.bold { font-size: 18px; font-weight: 700; }
.ital { font: italic 700 20px "Liberation Serif", serif; }
.und { font-size: 18px; font-weight: 600; color: #505050; text-decoration: underline; text-underline-offset: 2px; }
.strike { font-size: 14px; text-decoration: line-through; }
.x { font-size: 16px; font-weight: 600; }
.x sub, .x sup { font-size: 11px; line-height: 10px; color: #3f73ab; }
.x sub { align-self: flex-end; margin-bottom: 3px; }
.x sup { align-self: flex-start; margin-top: 4px; }
.mark { position: relative; }
.hl { position: absolute; left: 6px; top: -5px; font-size: 12px; color: #555; }
.shade { background: #b4b4b4; width: 16px; height: 18px; line-height: 18px; font-weight: 600; }
.circ { border: 1px solid #666; border-radius: 50%; width: 17px; height: 17px; font-size: 11px; line-height: 15px; }

.gallery { display: flex; margin: 2px 13px 0 0; height: 79px; border: 2px solid #d8d8d8; background: #fff; }
.st { flex: 1; min-width: 0; flex-direction: column; justify-content: flex-start; padding: 0 7px; }
.st.cur { border: 1px solid #8e8e8e; outline: 5px solid #cacaca; outline-offset: -6px; padding: 0 6px; }
.pv { width: 100%; height: 36px; margin-top: 9px; overflow: hidden; white-space: nowrap; text-align: left; font: 17px/36px "Liberation Serif", serif; color: #222; }
.cur .pv { margin-top: 8px; }
.p2 { font-size: 18px; }
.p3 { font-size: 25px; color: #000; }
.nm { color: #555; line-height: 26px; white-space: nowrap; }
.nm small { font: 12px "DejaVu Sans", sans-serif; margin-right: 3px; }
.gs { width: 19px; display: flex; flex-direction: column; border-left: 1px solid #ccc; }
.gs button { flex: 1; border-bottom: 1px solid #ccc; }
.gs .off { background: #e6e6e6; }

.cmds { display: flex; flex-direction: column; align-items: flex-start; padding: 0 0 0 18px; color: #222; }
.cmd { height: 30px; gap: 4px; }
.cmd > :first-child { width: 18px; }
.cmd > svg:last-child { margin-left: 1px; }
.cmd.wide > svg:last-child { margin-left: 10px; }
.cmd:first-child { margin-top: -3px; }
.rep { display: flex; flex-direction: column; font-size: 12px; line-height: 10px; }
.rep b { font-weight: 400; color: #8a4fa5; text-align: left; }
.rep i { font-style: normal; color: #3f73ab; font-size: 11px; }
.bb { width: 100%; flex-direction: column; padding-top: 3px; line-height: 20px; gap: 0; color: #222; white-space: nowrap; }
.bb svg { margin-bottom: 3px; }
.fold { flex: none; margin-top: auto; width: 41px; padding-right: 6px; height: 16px; }

/* floating input-method bar */
.ime { position: absolute; right: 51px; top: 99px; z-index: 3; display: flex; align-items: center; height: 33px; width: 294px; padding: 0 0 0 42px; background: #fdfdfe; border: 1px solid #c3d3e4; border-radius: 3px; }
.imelogo { position: absolute; left: -3px; top: -7px; }
.ime button { flex: 1; height: 30px; }
.zh { font-size: 20px; font-weight: 500; color: #0f68c4; }

/* document */
.work { flex: 1; min-height: 0; position: relative; display: flex; justify-content: center; background: #e4e4e4; overflow: hidden; }
.page { position: relative; width: 912px; margin-right: 22px; background: #fdfdfd; border: solid #c9c9c9; border-width: 0 1px; overflow: hidden; isolation: isolate; }
.wm { position: absolute; left: 0; top: 0; z-index: -1; }
.text { margin-top: -20px; padding: 0 97px 0 133px; font: 18px/36px "Liberation Serif", "Noto Sans CJK SC", serif; font-weight: 300; color: #1c1c1c; white-space: nowrap; }
.no { display: inline-block; width: 38px; text-align: left; text-align-last: left; font-weight: 400; }
.ln35 { line-height: 35px; }
.ln37 { line-height: 37px; }
.ln38 { line-height: 38px; }
.in { padding-left: 37px; }
.out { margin-left: -36px; }
.just { text-align: justify; text-align-last: justify; white-space: normal; }
.early { padding-right: 18px; }
.tabbed { display: flex; }
.tight { line-height: 26px; padding: 6px 0 5px; }
.cr { font: 18px/20px "DejaVu Sans", sans-serif; color: #909090; }
.tabbed .cr { line-height: 37px; margin-left: 205px; }
.text b { font-weight: 700; }
mark { background: #c4c4c4; color: inherit; padding: 2px 0 13px; }
u { text-decoration: underline 1px #222; text-underline-offset: 4px; }
.dbl { text-decoration: underline double 1px #4a7fb5; }
.red { text-decoration: underline wavy 1px #d03c3c; text-underline-offset: 2px; }
.tint { background: linear-gradient(#fff0 80%, #9fb8e0 80%); }
.corners { position: absolute; left: 65px; right: 59px; bottom: 0; height: 3px; display: flex; justify-content: space-between; }
.corners i { width: 30px; border: solid #c4c4c4; border-width: 1px 1px 0 0; }
.corners .r { border-width: 1px 0 0 1px; }
.ibeam { position: absolute; left: 675px; top: 370px; }
.scroll { position: absolute; right: 0; top: 0; bottom: 0; width: 22px; padding: 1px 0; background: #f0f0f0; display: flex; flex-direction: column; }
.scroll button, .thumb { height: 21px; background: #fff; border: 1px solid #808080; }
.scroll .thumb { margin-top: 15px; height: 22px; }
.scroll .down { margin-top: auto; }

/* status bar */
.status { height: 30px; display: flex; align-items: center; padding: 0 10px 0 15px; gap: 23px; border: solid #bdbdbd; border-width: 1px 0; background: #f1f1f1; }
.acc { display: flex; align-items: center; gap: 3px; margin-left: 3px; }
.views { margin-left: auto; display: flex; align-self: stretch; }
.views button { width: 53px; }
.views .on { background: #c8c8c8; }
.zoom { display: flex; align-items: center; gap: 7px; margin-left: -15px; }
.zoom span { margin-left: 9px; }
.zoom input { appearance: none; width: 131px; height: 14px; margin: 0; background: linear-gradient(#444, #444) center / 100% 2px no-repeat; }
.zoom input::-webkit-slider-thumb { appearance: none; width: 7px; height: 14px; background: #444; }

/* taskbar */
.taskbar { position: relative; height: 62px; display: flex; align-items: center; justify-content: center; background: linear-gradient(90deg, #c3eff0 0, #c6eff1 10%, #d9eff3 15%, #deeff3 24%, #f7e5db 28%, #f5e6dc 31%, #e0edee 34%, #e4eeee 40%, #f6e5db 44%, #f1e0d6 60%, #f3e3d9 70%, #d8f0f4 74%, #d5f0f4 85%, #ece7de 88%, #cdf0ef 93%, #c8eeee 100%); }
.apps { display: flex; gap: 10px; padding-left: 2px; }
.apps button { position: relative; width: 48px; height: 50px; border-radius: 5px; }
.run::after { content: ""; position: absolute; bottom: 1px; left: 20px; width: 8px; height: 3px; border-radius: 2px; background: #857b77; }
.active { background: #fbf2ec; box-shadow: 0 0 0 1px #eadcd3, 4px 0 0 #f7eae2; }
.active::after { left: 14px; width: 20px; background: #1f6bb8; }
.tray { position: absolute; right: 27px; display: flex; align-items: center; color: #222; }
.tray button { width: 42px; height: 40px; }
.tray .so { width: 60px; }
.sys { display: flex; gap: 9px; margin-left: 8px; }
.clock { width: 94px; margin-right: 11px; display: flex; flex-direction: column; text-align: right; font-size: 15px; line-height: 21px; }
```
